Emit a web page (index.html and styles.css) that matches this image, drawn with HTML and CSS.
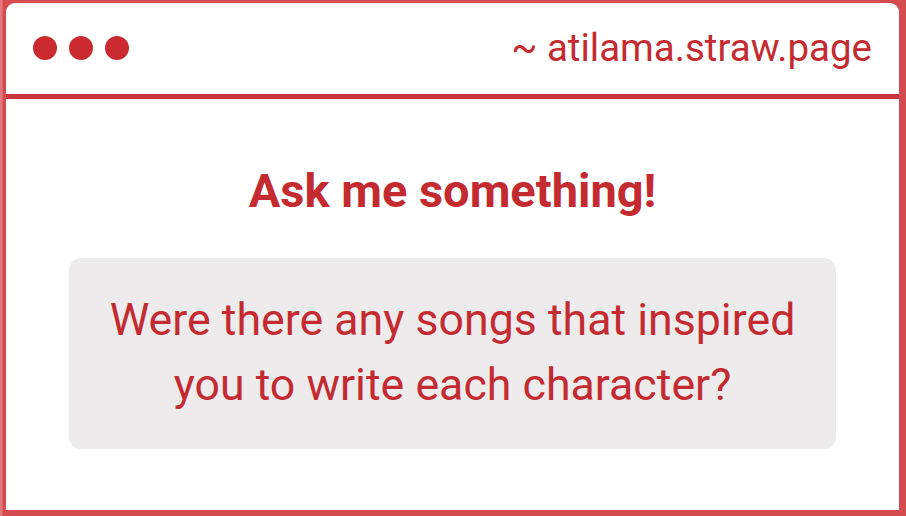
FILE: index.html
```html
<!DOCTYPE html>
<html>
<head>
<meta charset="utf-8">
<link rel="stylesheet" href="styles.css">
</head>
<body>
<div class="frame">
  <div class="card">
    <header class="bar">
      <div class="dots"><span class="dot"></span><span class="dot"></span><span class="dot"></span></div>
      <div class="url">~ atilama.straw.page</div>
    </header>
    <main class="content">
      <h1 class="title">Ask me something!</h1>
      <div class="question">Were there any songs that inspired<br>you to write each character?</div>
    </main>
  </div>
</div>
</body>
</html>
```

FILE: styles.css
```css
html, body {
  margin: 0;
  padding: 0;
}
body {
  width: 906px;
  height: 516px;
  overflow: hidden;
  font-family: Roboto, "Liberation Sans", sans-serif;
  background: #d44b50;
}
.frame {
  box-sizing: border-box;
  width: 906px;
  height: 516px;
  padding: 3px 7px 6px 6px;
  background: linear-gradient(to right, #e3787c 0, #e3787c 2px, #d44b50 3px);
  display: flex;
}
.card {
  flex: 1;
  background: #ffffff;
  border-radius: 9px 9px 0 0;
  display: flex;
  flex-direction: column;
  overflow: hidden;
}
.bar {
  box-sizing: border-box;
  height: 96px;
  border-bottom: 5px solid #c8363b;
  display: flex;
  align-items: center;
  justify-content: space-between;
  padding: 0 27px;
}
.dots {
  display: flex;
  gap: 12px;
  margin-bottom: 2px;
}
.dot {
  width: 24px;
  height: 24px;
  border-radius: 50%;
  background: #cb2a30;
}
.url {
  font-size: 38.5px;
  color: #c42b31;
  line-height: 44px;
  margin-bottom: 1px;
}
.content {
  flex: 1;
  display: flex;
  flex-direction: column;
  align-items: center;
  padding: 64px 63px 0;
}
.title {
  margin: 0;
  font-size: 47px;
  line-height: 56px;
  font-weight: 700;
  color: #c42b31;
}
.question {
  box-sizing: border-box;
  align-self: stretch;
  margin-top: 39px;
  height: 191px;
  padding: 30px 10px;
  background: #edebec;
  border-radius: 12px;
  text-align: center;
  font-size: 44.7px;
  line-height: 65px;
  color: #c42b31;
}
```
